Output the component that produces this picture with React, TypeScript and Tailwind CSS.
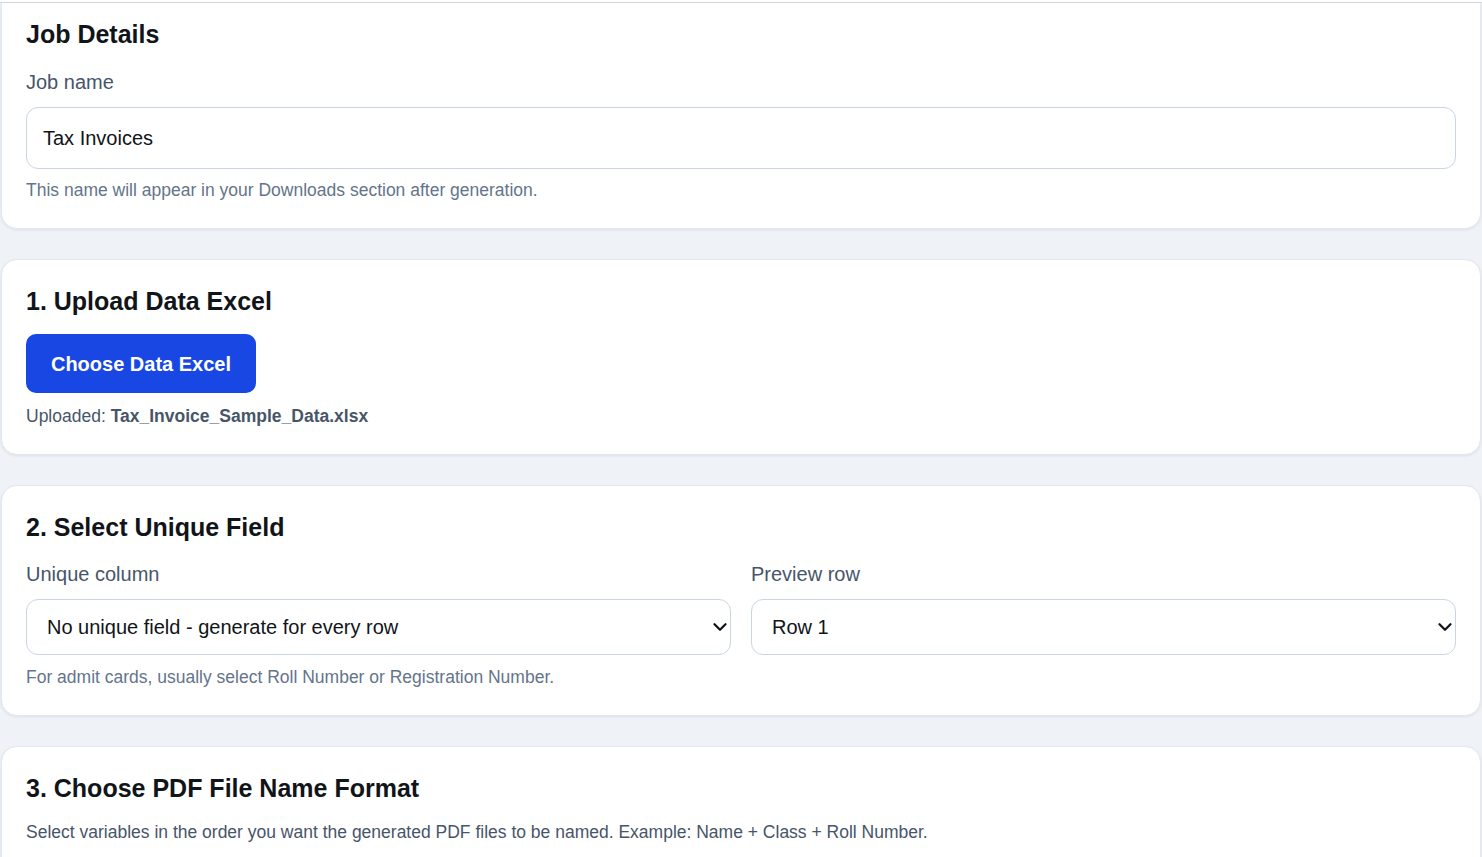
import { ChevronDown } from "lucide-react"

const Card = ({ children, first = false }: { children: React.ReactNode; first?: boolean }) => (
  <div
    className={`bg-white border border-[#e2e8f0] shadow-[0_1px_3px_rgba(15,23,42,0.08)] px-6 pb-6 ${
      first ? "rounded-b-2xl border-t-0 pt-[15px]" : "rounded-2xl pt-[25px]"
    }`}
  >
    {children}
  </div>
)

const Heading = ({ children }: { children: React.ReactNode }) => (
  <h2 className="text-[25px] leading-8 font-bold text-[#111418]">{children}</h2>
)

const SelectBox = ({ value, options }: { value: string; options: string[] }) => (
  <div className="relative">
    <select
      defaultValue={value}
      className="w-full h-14 appearance-none rounded-xl border border-[#cbd5e1] bg-white pl-5 pr-10 text-xl text-[#111418] outline-none"
    >
      {options.map((o) => (
        <option key={o}>{o}</option>
      ))}
    </select>
    <ChevronDown
      size={22}
      strokeWidth={2.5}
      className="pointer-events-none absolute right-0 top-1/2 -translate-y-1/2 text-[#111418]"
    />
  </div>
)

const App = () => {
  return (
    <div className="min-h-screen bg-[#eff2f7] font-['Liberation_Sans',Arial,sans-serif]">
      <div className="h-[3px] bg-white border-b border-[#d4d8de]" />
      <div className="flex flex-col gap-[30px] px-px">
        <Card first>
          <Heading>Job Details</Heading>
          <label className="block mt-[18px] text-xl leading-7 text-[#475569]">Job name</label>
          <input
            defaultValue="Tax Invoices"
            className="mt-[11px] block w-full h-[62px] rounded-xl border border-[#cbd5e1] px-4 text-xl text-[#111418] outline-none"
          />
          <p className="mt-[7px] text-[17.5px] leading-7 text-[#64748b]">
            This name will appear in your Downloads section after generation.
          </p>
        </Card>

        <Card>
          <Heading>1. Upload Data Excel</Heading>
          <button className="mt-[17px] h-[59px] w-[230px] rounded-[10px] bg-[#1847e3] text-xl font-bold text-white">
            Choose Data Excel
          </button>
          <p className="mt-[9px] text-[17.5px] leading-7 text-[#475569]">
            Uploaded: <span className="font-bold">Tax_Invoice_Sample_Data.xlsx</span>
          </p>
        </Card>

        <Card>
          <Heading>2. Select Unique Field</Heading>
          <div className="mt-[17px] grid grid-cols-2 gap-5">
            <div>
              <label className="block text-xl leading-7 text-[#475569]">Unique column</label>
              <div className="mt-[11px]">
                <SelectBox
                  value="No unique field - generate for every row"
                  options={["No unique field - generate for every row", "Roll Number", "Registration Number"]}
                />
              </div>
            </div>
            <div>
              <label className="block text-xl leading-7 text-[#475569]">Preview row</label>
              <div className="mt-[11px]">
                <SelectBox value="Row 1" options={["Row 1", "Row 2", "Row 3"]} />
              </div>
            </div>
          </div>
          <p className="mt-2 text-[17.5px] leading-7 text-[#64748b]">
            For admit cards, usually select Roll Number or Registration Number.
          </p>
        </Card>

        <Card>
          <Heading>3. Choose PDF File Name Format</Heading>
          <p className="mt-[14px] text-[17.5px] leading-7 text-[#475569]">
            Select variables in the order you want the generated PDF files to be named. Example: Name + Class + Roll Number.
          </p>
          <div className="h-40" />
        </Card>
      </div>
    </div>
  )
}

export default App
